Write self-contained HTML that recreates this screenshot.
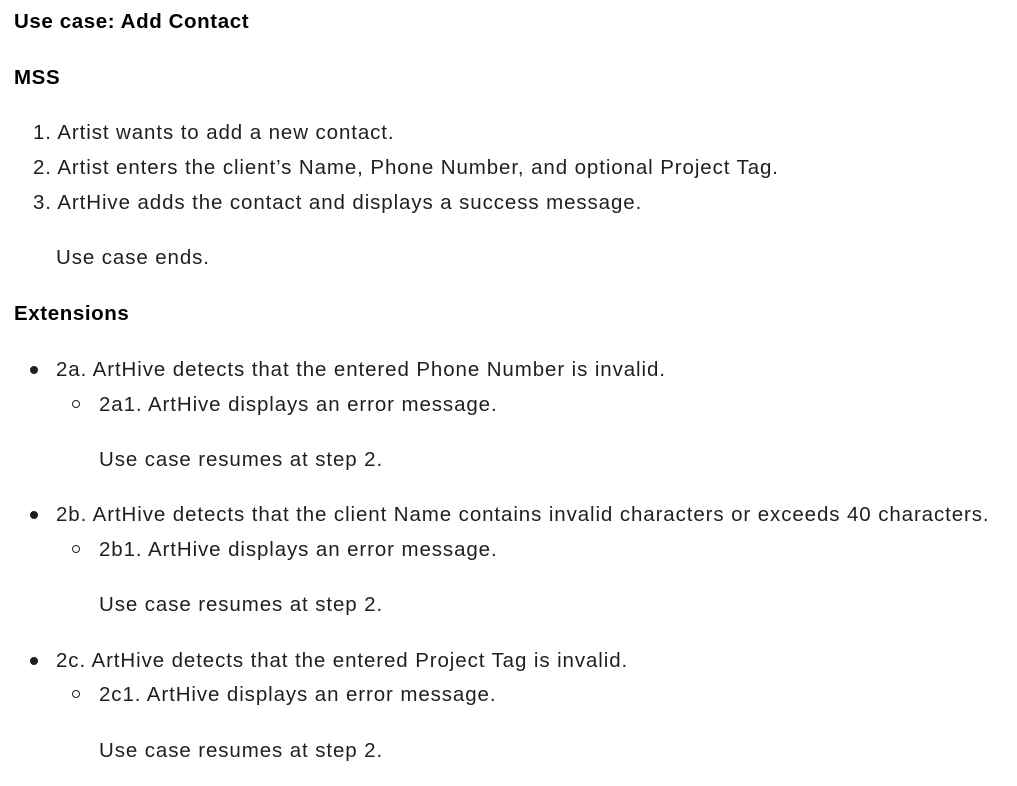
<!DOCTYPE html>
<html><head><meta charset="utf-8"><style>
body{margin:0;background:#fff;width:1017px;height:786px;position:relative;font-family:"Liberation Sans",sans-serif;font-size:20.5px;letter-spacing:0.9px;color:#1f1f1f;}
.l{position:absolute;line-height:28px;white-space:nowrap;}
b{font-weight:bold;color:#000;letter-spacing:0.6px}
.dot{position:absolute;width:8px;height:8px;border-radius:50%;background:#1f1f1f;}
.circ{position:absolute;width:6px;height:6px;border-radius:50%;border:1.5px solid #1f1f1f;}
</style></head><body>
<div class="l" style="left:14px;top:8px"><b>Use case: Add Contact</b></div>
<div class="l" style="left:14px;top:64px"><b>MSS</b></div>
<div class="l" style="left:33px;top:119px">1. Artist wants to add a new contact.</div>
<div class="l" style="left:33px;top:154px">2. Artist enters the client’s Name, Phone Number, and optional Project Tag.</div>
<div class="l" style="left:33px;top:189px">3. ArtHive adds the contact and displays a success message.</div>
<div class="l" style="left:56px;top:244px">Use case ends.</div>
<div class="l" style="left:14px;top:300px"><b>Extensions</b></div>

<div class="dot" style="left:30px;top:366px"></div>
<div class="l" style="left:56px;top:356px">2a. ArtHive detects that the entered Phone Number is invalid.</div>
<div class="circ" style="left:72px;top:400px"></div>
<div class="l" style="left:99px;top:391px">2a1. ArtHive displays an error message.</div>
<div class="l" style="left:99px;top:446px">Use case resumes at step 2.</div>

<div class="dot" style="left:30px;top:511px"></div>
<div class="l" style="left:56px;top:501px">2b. ArtHive detects that the client Name contains invalid characters or exceeds 40 characters.</div>
<div class="circ" style="left:72px;top:545px"></div>
<div class="l" style="left:99px;top:536px">2b1. ArtHive displays an error message.</div>
<div class="l" style="left:99px;top:591px">Use case resumes at step 2.</div>

<div class="dot" style="left:30px;top:657px"></div>
<div class="l" style="left:56px;top:647px">2c. ArtHive detects that the entered Project Tag is invalid.</div>
<div class="circ" style="left:72px;top:690px"></div>
<div class="l" style="left:99px;top:681px">2c1. ArtHive displays an error message.</div>
<div class="l" style="left:99px;top:737px">Use case resumes at step 2.</div>
</body></html>
